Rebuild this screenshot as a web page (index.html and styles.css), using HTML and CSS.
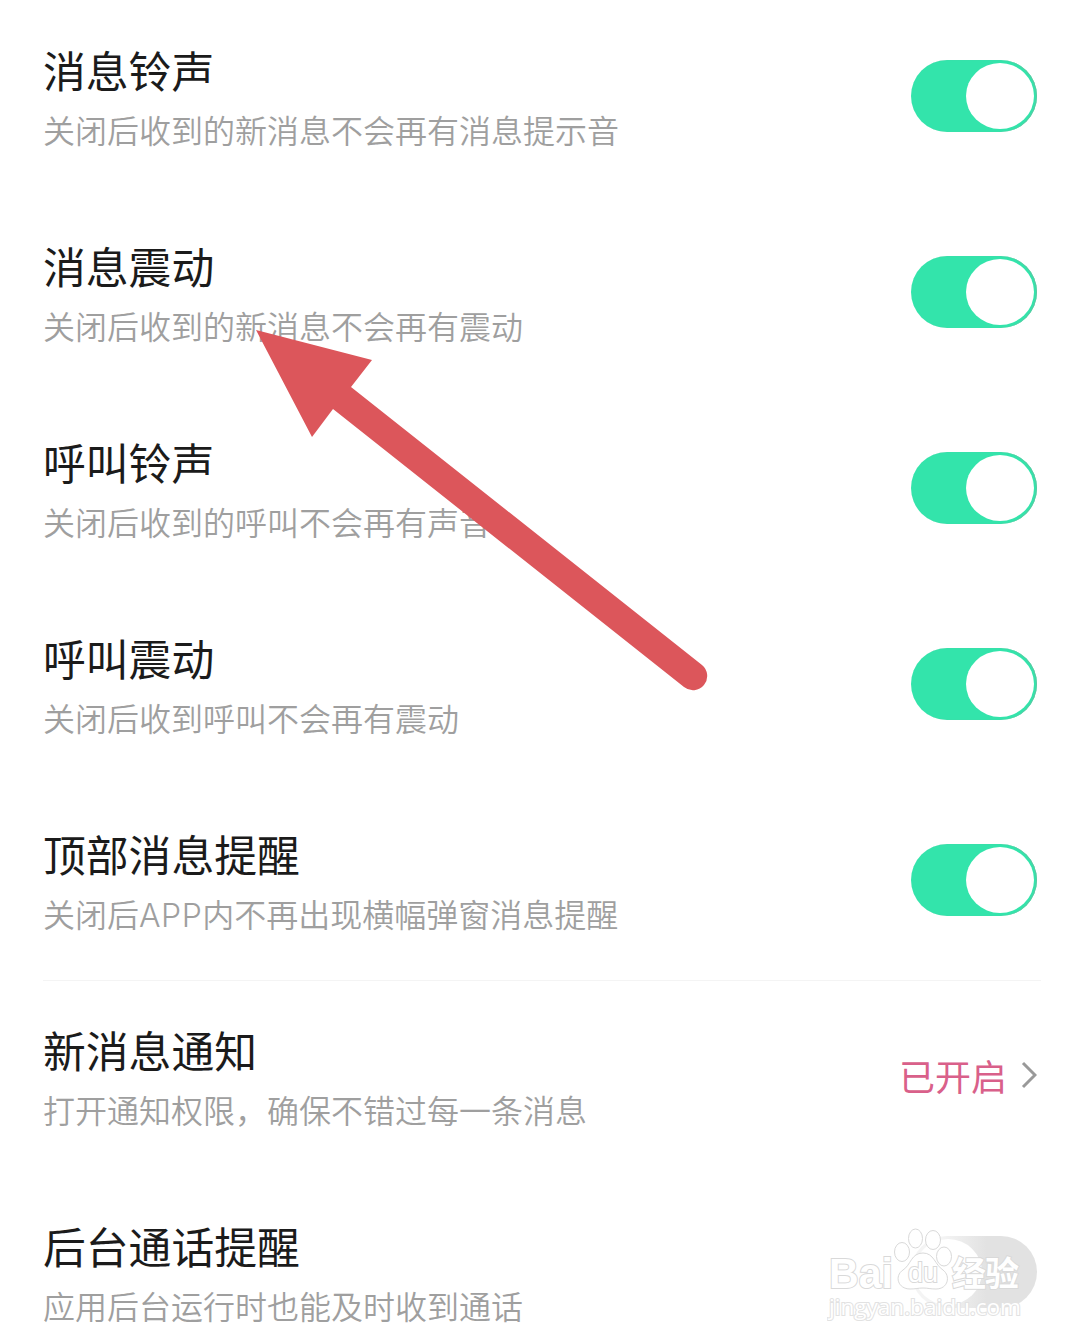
FILE: index.html
```html
<!DOCTYPE html>
<html lang="zh-CN">
<head>
  <meta charset="UTF-8">
  <meta name="viewport" content="width=device-width, initial-scale=1.0">
  <title>消息通知设置</title>
  <link rel="stylesheet" href="styles.css">
</head>
<body>

<ul class="settings">
  <li class="row">
    <div class="text">
      <h2>消息铃声</h2>
      <p>关闭后收到的新消息不会再有消息提示音</p>
    </div>
    <span class="switch on"></span>
  </li>
  <li class="row">
    <div class="text">
      <h2>消息震动</h2>
      <p>关闭后收到的新消息不会再有震动</p>
    </div>
    <span class="switch on"></span>
  </li>
  <li class="row">
    <div class="text">
      <h2>呼叫铃声</h2>
      <p>关闭后收到的呼叫不会再有声音</p>
    </div>
    <span class="switch on"></span>
  </li>
  <li class="row">
    <div class="text">
      <h2>呼叫震动</h2>
      <p>关闭后收到呼叫不会再有震动</p>
    </div>
    <span class="switch on"></span>
  </li>
  <li class="row divided">
    <div class="text">
      <h2>顶部消息提醒</h2>
      <p>关闭后<span class="latin">APP</span>内不再出现横幅弹窗消息提醒</p>
    </div>
    <span class="switch on"></span>
  </li>
  <li class="row">
    <div class="text">
      <h2>新消息通知</h2>
      <p>打开通知权限，确保不错过每一条消息</p>
    </div>
    <span class="status">已开启
      <svg class="chevron" viewBox="0 0 16 28"><path d="M2 2 L14 14 L2 26"/></svg>
    </span>
  </li>
  <li class="row">
    <div class="text">
      <h2>后台通话提醒</h2>
      <p>应用后台运行时也能及时收到通话</p>
    </div>
    <span class="switch"></span>
  </li>
</ul>

<!-- pointer arrow -->
<svg class="arrow" viewBox="0 0 1080 1344">
  <path d="M256 330 L372 360 L351 387 L702 665 A14 14 0 0 1 684 687 L333 409 L312 437 Z"/>
</svg>

<svg class="watermark" viewBox="0 0 204 96">
  <text class="bai" x="2" y="60" textLength="64" lengthAdjust="spacingAndGlyphs">Bai</text>
  <ellipse cx="75" cy="24" rx="7.5" ry="9.5"/>
  <ellipse cx="88.5" cy="10.5" rx="7" ry="9.5"/>
  <ellipse cx="106" cy="12" rx="7.5" ry="9.5"/>
  <ellipse cx="117" cy="28.5" rx="7.5" ry="9.5"/>
  <path d="M96 25 C84 25 84 37 76 42 C67 48 71 61 83 61 C89 61 91 60 96 60 C101 60 103 61 109 61 C121 61 124 48 116 42 C108 37 107 25 96 25Z"/>
  <text class="du" x="81" y="54" textLength="30">du</text>
  <text class="cn" x="125" y="58" textLength="67">经验</text>
  <text class="site" x="2" y="87" textLength="192" lengthAdjust="spacingAndGlyphs">jingyan.baidu.com</text>
</svg>

</body>
</html>
```
FILE: styles.css
```css
body {
  margin: 0;
  height: 1344px;
  position: relative;
  overflow: hidden;
  background: #fff;
  font-family: "Noto Sans CJK SC", sans-serif;
}
.settings {
  list-style: none;
  margin: 0;
  padding: 0 43px;
}
.row {
  height: 196px;
  box-sizing: border-box;
  display: flex;
  justify-content: space-between;
  align-items: flex-start;
  padding-top: 38px;
}
.divided {
  margin-right: -4px;
  padding-right: 4px;
  box-shadow: 0 1px 0 #f4f4f4;
}
h2 {
  margin: 0;
  font-size: 42.8px;
  line-height: 62px;
  font-weight: 400;
  color: #1b1b1b;
}
p {
  margin: 0;
  font-size: 32px;
  line-height: 58px;
  font-weight: 350;
  color: #9f9f9f;
}
.latin {
  font-family: Inter, sans-serif;
  font-weight: 300;
  line-height: 1;
  letter-spacing: 0.5px;
}
.switch {
  width: 126px;
  height: 72px;
  margin-top: 22px;
  border-radius: 36px;
  box-sizing: border-box;
  padding: 3px;
  background: linear-gradient(90deg, #f4f4f4 25%, #e2e2e2 60%);
}
.switch::before {
  content: "";
  display: block;
  width: 68px;
  height: 66px;
  border-radius: 50%;
  background: #fff;
}
.switch.on {
  background: #33e4ab;
  box-shadow: inset -1px 0 1px #5fc5a0;
}
.switch.on::before {
  margin-left: auto;
}
.status {
  display: flex;
  align-items: center;
  gap: 14px;
  margin-top: 31px;
  font-size: 36px;
  line-height: 52px;
  font-weight: 400;
  color: #d9608a;
}
.chevron {
  width: 16px;
  height: 28px;
  fill: none;
  stroke: #999;
  stroke-width: 3;
}
.arrow {
  position: absolute;
  left: 0;
  top: 0;
  width: 1080px;
  height: 1344px;
  fill: #dc565b;
}
.watermark {
  position: absolute;
  left: 827px;
  top: 1228px;
  width: 204px;
  height: 96px;
  fill: #fff;
  stroke: #d9d9d9;
  stroke-width: 1;
}
.watermark text {
  paint-order: stroke;
  stroke-width: 2;
}
.bai {
  font: 700 43px "Liberation Sans", sans-serif;
}
.du {
  font: 400 27px "Liberation Sans", sans-serif;
}
.cn {
  font: 700 34px "Noto Sans CJK SC", sans-serif;
}
.watermark .site {
  font: 400 21px "Open Sans", sans-serif;
  stroke: #e2e2e2;
}
```
